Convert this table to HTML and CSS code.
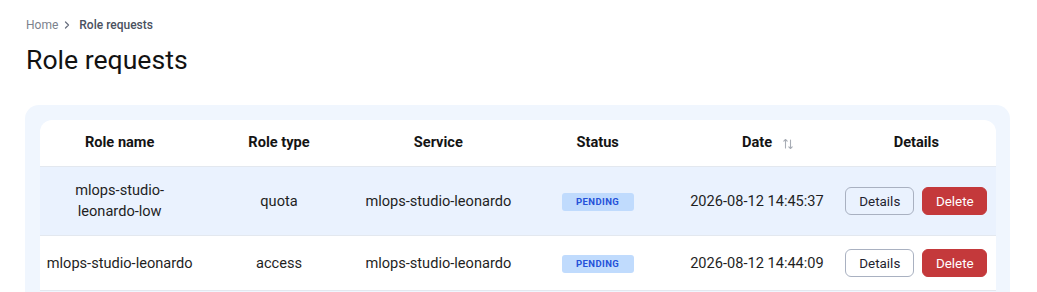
FILE: index.html
```html
<!DOCTYPE html>
<html lang="en">
<head>
<meta charset="utf-8">
<title>Role requests</title>
<link rel="stylesheet" href="styles.css">
</head>
<body>
<div class="page">
  <nav class="breadcrumb">
    <span class="crumb-home">Home</span>
    <svg class="crumb-sep" width="12" height="12" viewBox="0 0 12 12"><path d="M4.5 3 L7.5 6 L4.5 9" fill="none" stroke="#6b7280" stroke-width="1.3" stroke-linecap="round" stroke-linejoin="round"/></svg>
    <span class="crumb-current">Role requests</span>
  </nav>
  <h1 class="title">Role requests</h1>
  <section class="panel">
    <div class="card">
      <table class="table">
        <thead>
          <tr>
            <th>Role name</th>
            <th>Role type</th>
            <th>Service</th>
            <th>Status</th>
            <th><span class="sort">Date<svg class="sort-icon" width="10" height="12" viewBox="0 0 10 12"><path d="M2.5 10 V1.5 M0.8 3.2 L2.5 1.5 L4.2 3.2" fill="none" stroke="#a8adb5" stroke-width="1.1" stroke-linecap="round" stroke-linejoin="round"/><path d="M7.5 2 V10.5 M5.8 8.8 L7.5 10.5 L9.2 8.8" fill="none" stroke="#a8adb5" stroke-width="1.1" stroke-linecap="round" stroke-linejoin="round"/></svg></span></th>
            <th>Details</th>
          </tr>
        </thead>
        <tbody>
          <tr class="row-active">
            <td>mlops-studio-<br>leonardo-low</td>
            <td>quota</td>
            <td>mlops-studio-leonardo</td>
            <td><span class="badge">PENDING</span></td>
            <td>2026-08-12 14:45:37</td>
            <td><div class="actions"><button class="btn btn-outline">Details</button><button class="btn btn-danger">Delete</button></div></td>
          </tr>
          <tr>
            <td>mlops-studio-leonardo</td>
            <td>access</td>
            <td>mlops-studio-leonardo</td>
            <td><span class="badge">PENDING</span></td>
            <td>2026-08-12 14:44:09</td>
            <td><div class="actions"><button class="btn btn-outline">Details</button><button class="btn btn-danger">Delete</button></div></td>
          </tr>
        </tbody>
      </table>
    </div>
  </section>
</div>
</body>
</html>
```
FILE: styles.css
```css
* { box-sizing: border-box; }
html, body { margin: 0; padding: 0; background: #ffffff; }
body {
  font-family: Roboto, "Liberation Sans", Arial, sans-serif;
  color: #1a1a1a;
}
.page {
  padding: 17px 27px 0 25px;
}
.breadcrumb {
  display: flex;
  align-items: center;
  gap: 0;
  font-size: 12px;
  line-height: 16px;
  padding-left: 1px;
}
.crumb-home { color: #7b818c; }
.crumb-sep { display: block; margin: 0 6px 0 3px; }
.crumb-current { color: #4a5160; font-weight: 500; }
.title {
  margin: 11px 0 0 1px;
  font-size: 26.6px;
  line-height: 32px;
  font-weight: 400;
  color: #121212;
}
.panel {
  margin-top: 29px;
  background: #f0f6fe;
  border-radius: 14px;
  padding: 15px 14px 0 15px;
  height: 200px;
}
.card {
  background: #ffffff;
  border-radius: 12px 12px 0 0;
  overflow: hidden;
}
.table {
  width: 100%;
  border-collapse: collapse;
  table-layout: fixed;
  font-size: 14.6px;
  line-height: 21px;
}
.table th, .table td {
  text-align: center;
  vertical-align: middle;
  padding: 12px 4px 13px;
  border-bottom: 1px solid #e3e8ef;
}
.table th {
  font-weight: 700;
  color: #141414;
}
.table td {
  padding: 13px 4px;
  color: #1f1f1f;
}
.row-active td { background: #eaf2fe; }
.sort {
  display: inline-flex;
  align-items: center;
  gap: 11px;
  margin-right: -21px;
}
.sort-icon { display: block; margin-top: 2px; }
.badge {
  display: inline-block;
  width: 72px;
  height: 18px;
  line-height: 18px;
  border-radius: 3px;
  background: #c0dbfd;
  color: #2552d9;
  font-size: 9.5px;
  font-weight: 700;
  letter-spacing: 0.4px;
  vertical-align: middle;
}
.actions {
  display: flex;
  justify-content: center;
  gap: 8px;
}
.btn {
  height: 28px;
  border-radius: 6px;
  font-family: inherit;
  font-size: 13.4px;
  padding: 0;
  cursor: pointer;
}
.btn-outline {
  width: 69px;
  background: transparent;
  border: 1px solid #a9b1c1;
  color: #1f2330;
}
.btn-danger {
  width: 65px;
  background: #c4393b;
  border: 1px solid #c4393b;
  color: #ffffff;
}
```
